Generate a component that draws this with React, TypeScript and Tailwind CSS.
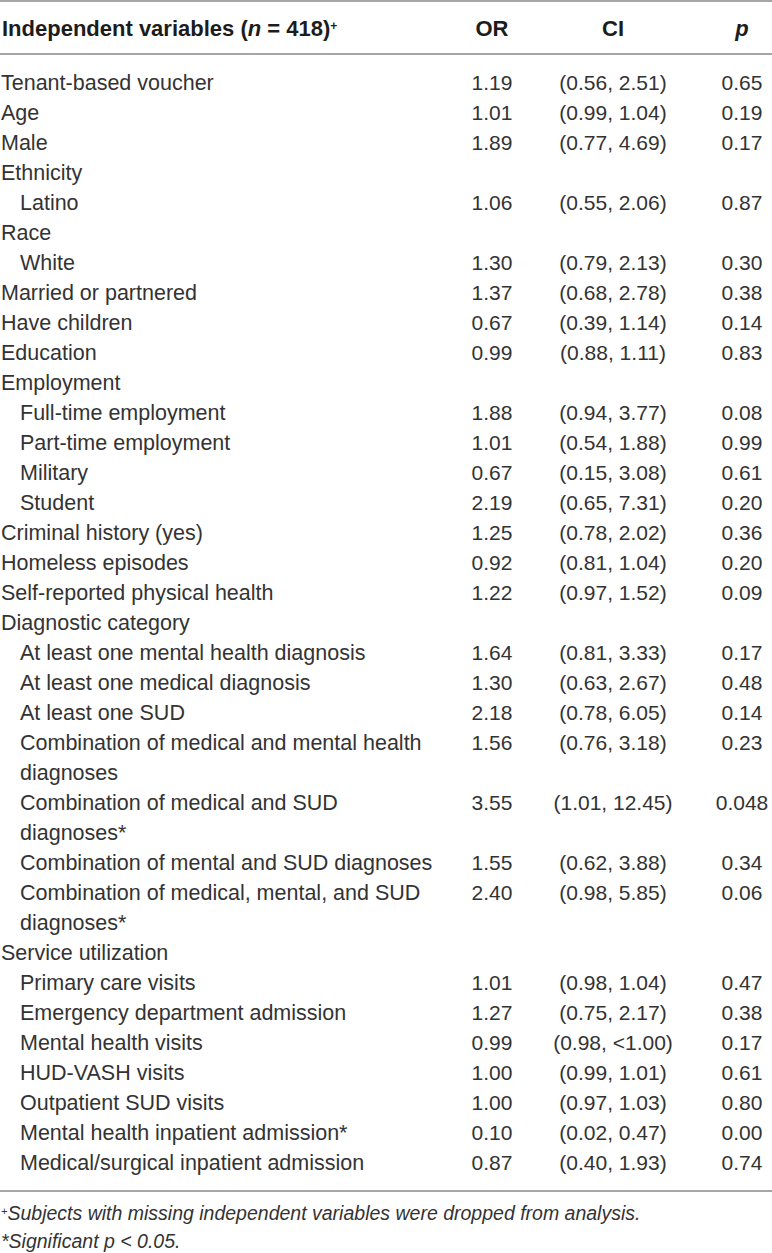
import React from "react";

type Row = {
  label: React.ReactNode;
  indent?: boolean;
  or?: string;
  ci?: string;
  p?: string;
};

const rows: Row[] = [
  { label: "Tenant-based voucher", or: "1.19", ci: "(0.56, 2.51)", p: "0.65" },
  { label: "Age", or: "1.01", ci: "(0.99, 1.04)", p: "0.19" },
  { label: "Male", or: "1.89", ci: "(0.77, 4.69)", p: "0.17" },
  { label: "Ethnicity" },
  { label: "Latino", indent: true, or: "1.06", ci: "(0.55, 2.06)", p: "0.87" },
  { label: "Race" },
  { label: "White", indent: true, or: "1.30", ci: "(0.79, 2.13)", p: "0.30" },
  { label: "Married or partnered", or: "1.37", ci: "(0.68, 2.78)", p: "0.38" },
  { label: "Have children", or: "0.67", ci: "(0.39, 1.14)", p: "0.14" },
  { label: "Education", or: "0.99", ci: "(0.88, 1.11)", p: "0.83" },
  { label: "Employment" },
  { label: "Full-time employment", indent: true, or: "1.88", ci: "(0.94, 3.77)", p: "0.08" },
  { label: "Part-time employment", indent: true, or: "1.01", ci: "(0.54, 1.88)", p: "0.99" },
  { label: "Military", indent: true, or: "0.67", ci: "(0.15, 3.08)", p: "0.61" },
  { label: "Student", indent: true, or: "2.19", ci: "(0.65, 7.31)", p: "0.20" },
  { label: "Criminal history (yes)", or: "1.25", ci: "(0.78, 2.02)", p: "0.36" },
  { label: "Homeless episodes", or: "0.92", ci: "(0.81, 1.04)", p: "0.20" },
  { label: "Self-reported physical health", or: "1.22", ci: "(0.97, 1.52)", p: "0.09" },
  { label: "Diagnostic category" },
  { label: "At least one mental health diagnosis", indent: true, or: "1.64", ci: "(0.81, 3.33)", p: "0.17" },
  { label: "At least one medical diagnosis", indent: true, or: "1.30", ci: "(0.63, 2.67)", p: "0.48" },
  { label: "At least one SUD", indent: true, or: "2.18", ci: "(0.78, 6.05)", p: "0.14" },
  {
    label: (
      <>
        Combination of medical and mental health
        <br />
        diagnoses
      </>
    ),
    indent: true,
    or: "1.56",
    ci: "(0.76, 3.18)",
    p: "0.23",
  },
  {
    label: (
      <>
        Combination of medical and SUD
        <br />
        diagnoses*
      </>
    ),
    indent: true,
    or: "3.55",
    ci: "(1.01, 12.45)",
    p: "0.048",
  },
  { label: "Combination of mental and SUD diagnoses", indent: true, or: "1.55", ci: "(0.62, 3.88)", p: "0.34" },
  {
    label: (
      <>
        Combination of medical, mental, and SUD
        <br />
        diagnoses*
      </>
    ),
    indent: true,
    or: "2.40",
    ci: "(0.98, 5.85)",
    p: "0.06",
  },
  { label: "Service utilization" },
  { label: "Primary care visits", indent: true, or: "1.01", ci: "(0.98, 1.04)", p: "0.47" },
  { label: "Emergency department admission", indent: true, or: "1.27", ci: "(0.75, 2.17)", p: "0.38" },
  { label: "Mental health visits", indent: true, or: "0.99", ci: "(0.98, <1.00)", p: "0.17" },
  { label: "HUD-VASH visits", indent: true, or: "1.00", ci: "(0.99, 1.01)", p: "0.61" },
  { label: "Outpatient SUD visits", indent: true, or: "1.00", ci: "(0.97, 1.03)", p: "0.80" },
  { label: "Mental health inpatient admission*", indent: true, or: "0.10", ci: "(0.02, 0.47)", p: "0.00" },
  { label: "Medical/surgical inpatient admission", indent: true, or: "0.87", ci: "(0.40, 1.93)", p: "0.74" },
];

const cols = "grid grid-cols-[456px_72px_170px_74px]";

export default function App() {
  return (
    <div className="w-[772px] bg-white font-['Liberation_Sans',Arial,sans-serif] text-[#333333]">
      <div className="border-t-2 border-[#a6a6a6]">
        {/* header */}
        <div className={`${cols} border-b-2 border-[#a6a6a6] pt-[12px] pb-[9px] text-[22px] leading-[30px] font-bold text-[#1c1c1c]`}>
          <div className="pl-[2px] whitespace-nowrap">
            Independent variables (<i>n</i> = 418)<sup className="text-[12px] font-bold">+</sup>
          </div>
          <div className="text-center">OR</div>
          <div className="text-center">CI</div>
          <div className="text-center pl-[14px]">
            <i>p</i>
          </div>
        </div>

        {/* body */}
        <div className="pt-[13px] pb-[12px] border-b-2 border-[#a6a6a6] text-[21px] leading-[30px]">
          {rows.map((r, i) => (
            <div key={i} className={cols}>
              <div className={`whitespace-nowrap text-[21.5px] ${r.indent ? "pl-[20px]" : "pl-[1px]"}`}>{r.label}</div>
              <div className="text-center">{r.or}</div>
              <div className="text-center">{r.ci}</div>
              <div className="text-center pl-[14px]">{r.p}</div>
            </div>
          ))}
        </div>

        {/* notes */}
        <div className="pt-[7px] pl-[1px] text-[19.5px] leading-[28px] italic">
          <p>
            <sup className="text-[11px]">+</sup>Subjects with missing independent variables were dropped from analysis.
          </p>
          <p>*Significant p &lt; 0.05.</p>
        </div>
      </div>
    </div>
  );
}
